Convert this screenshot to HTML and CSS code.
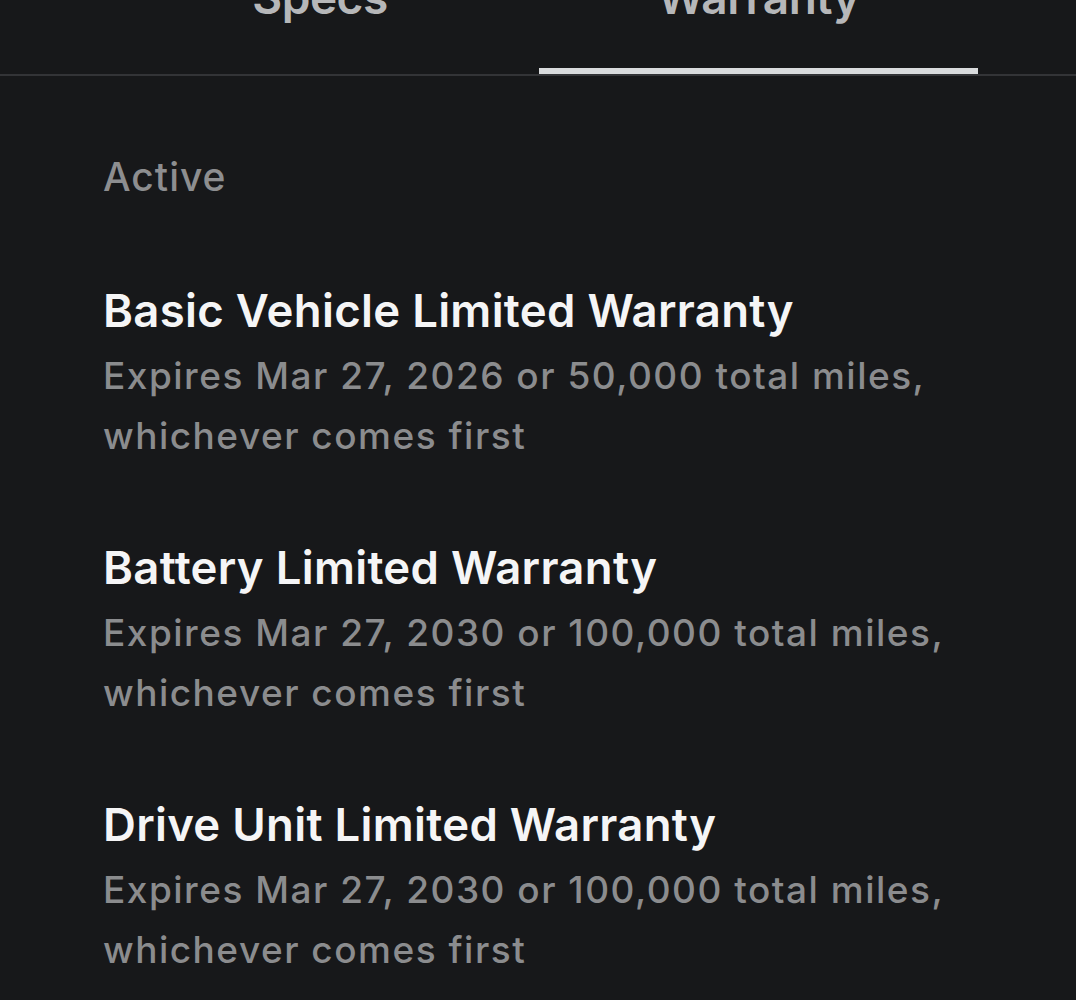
FILE: index.html
```html
<!DOCTYPE html>
<html lang="en">
<head>
<meta charset="utf-8">
<title>Warranty</title>
<link rel="stylesheet" href="styles.css">
</head>
<body>
<div class="page">
  <nav class="tabs">
    <div class="tab">Specs</div>
    <div class="tab tab-active">Warranty</div>
  </nav>
  <main class="content">
    <div class="section-label">Active</div>
    <section class="item">
      <h2 class="item-title">Basic Vehicle Limited Warranty</h2>
      <p class="item-desc">Expires Mar 27, 2026 or 50,000 total miles, whichever comes first</p>
    </section>
    <section class="item">
      <h2 class="item-title">Battery Limited Warranty</h2>
      <p class="item-desc">Expires Mar 27, 2030 or 100,000 total miles, whichever comes first</p>
    </section>
    <section class="item">
      <h2 class="item-title">Drive Unit Limited Warranty</h2>
      <p class="item-desc">Expires Mar 27, 2030 or 100,000 total miles, whichever comes first</p>
    </section>
  </main>
</div>
</body>
</html>
```

FILE: styles.css
```css
html, body {
  margin: 0;
  padding: 0;
  background: #17181a;
  height: 100%;
  overflow: hidden;
}
body {
  font-family: Inter, "Noto Sans", "Liberation Sans", sans-serif;
  -webkit-font-smoothing: antialiased;
}
.page {
  width: 1076px;
}
.tabs {
  display: flex;
  padding-left: 101px;
  border-bottom: 2px solid #333437;
  margin-top: -26px;
}
.tab {
  width: 438px;
  text-align: center;
  font-size: 46px;
  line-height: 46px;
  font-weight: 600;
  color: #b6b7b9;
  padding-bottom: 48px;
  border-bottom: 6px solid transparent;
  letter-spacing: -0.5px;
}
.tab-active {
  width: 439px;
  border-bottom-color: #d9dbdd;
}
.content {
  padding: 71px 103px 0 103px;
}
.section-label {
  font-size: 39px;
  line-height: 60px;
  font-weight: 500;
  color: #8d8e90;
  letter-spacing: 1px;
  margin-bottom: 74px;
}
.item {
  margin-bottom: 72px;
}
.item-title {
  margin: 0;
  font-size: 45.5px;
  line-height: 60px;
  font-weight: 600;
  color: #f5f5f6;
  letter-spacing: 0.3px;
}
.item-desc {
  margin: 0;
  font-size: 37px;
  line-height: 60px;
  font-weight: 500;
  color: #8b8c8e;
  letter-spacing: 1.5px;
  padding-top: 5px;
}
```
